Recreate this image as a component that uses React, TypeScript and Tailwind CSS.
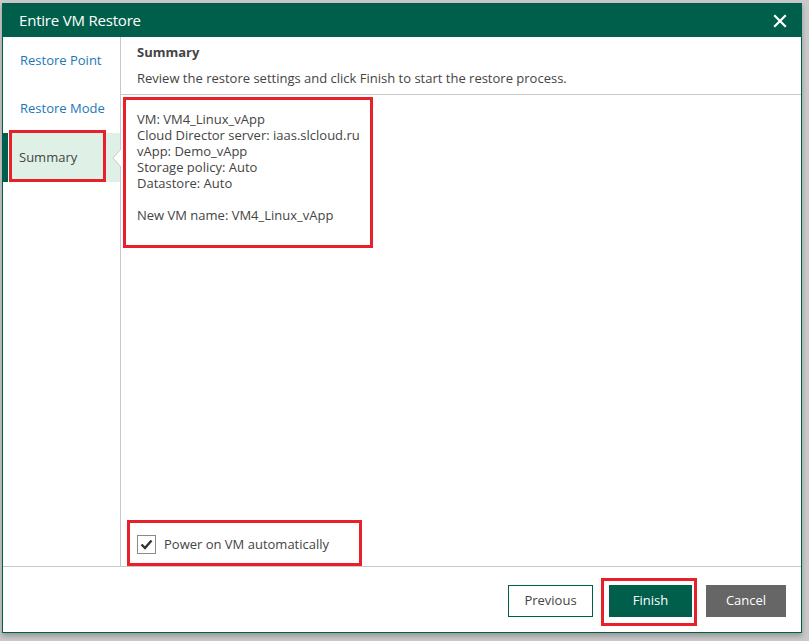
import React from "react";

const font = { fontFamily: '"Open Sans", "Noto Sans", sans-serif' };

export default function App() {
  const lines = [
    "VM: VM4_Linux_vApp",
    "Cloud Director server: iaas.slcloud.ru",
    "vApp: Demo_vApp",
    "Storage policy: Auto",
    "Datastore: Auto",
  ];
  return (
    <div
      className="relative w-[809px] h-[641px] bg-[#c9c9c9] pt-[3px] pl-[2px] overflow-hidden"
      style={font}
    >
      <div className="w-[800px] h-[630px] bg-white border border-[#005f4b] flex flex-col shadow-[0_3px_5px_rgba(0,0,0,0.25)]">
        {/* Header */}
        <div className="h-[33px] bg-[#005f4b] flex items-center justify-between pl-[16px] pr-[14px] shrink-0">
          <span className="text-white text-[15px] tracking-[-0.2px]">Entire VM Restore</span>
          <svg width="14" height="14" viewBox="0 0 14 14">
            <path d="M2 2 L12 12 M12 2 L2 12" stroke="white" strokeWidth="2.2" strokeLinecap="square" />
          </svg>
        </div>
        {/* Body */}
        <div className="flex flex-1 min-h-0 border-b border-[#c8c8c8]">
          {/* Sidebar */}
          <div className="w-[118px] border-r border-[#c8c8c8] shrink-0 flex flex-col">
            <div className="h-[48px] flex items-center pl-[17px] text-[13px] text-[#1b78b8]">Restore Point</div>
            <div className="h-[48px] flex items-center pl-[17px] text-[13px] text-[#1b78b8]">Restore Mode</div>
            <div className="relative h-[49px] flex items-center">
              <div className="w-[5px] h-full bg-[#005f4b]" />
              <div className="flex-1 h-full bg-[#dff0e7] ml-[1px] flex items-center pl-[10px] text-[13px] text-[#444]">
                Summary
              </div>
              <svg className="absolute right-[-1px] top-[16px]" width="9" height="18" viewBox="0 0 9 18">
                <path d="M9 0 L1 9 L9 18 Z" fill="white" />
                <path d="M9 0 L1 9 L9 18" fill="none" stroke="#c8c8c8" strokeWidth="1" />
              </svg>
            </div>
          </div>
          {/* Main */}
          <div className="flex-1 flex flex-col min-w-0">
            <div className="h-[58px] border-b border-[#c8c8c8] pl-[16px] pt-[6px] shrink-0">
              <div className="text-[13px] font-bold text-[#444] leading-[18px]">Summary</div>
              <div className="text-[13px] text-[#444] leading-[18px] mt-[8px]">
                Review the restore settings and click Finish to start the restore process.
              </div>
            </div>
            <div className="flex-1 flex flex-col justify-between pl-[16px] pt-[16px] pb-[12px]">
              <div className="text-[13px] text-[#444] leading-[16px]">
                {lines.map((l) => (
                  <div key={l}>{l}</div>
                ))}
                <div className="h-[16px]" />
                <div>New VM name: VM4_Linux_vApp</div>
              </div>
              <div className="flex items-center gap-[8px]">
                <div className="w-[19px] h-[19px] border border-[#8a8a8a] flex items-center justify-center">
                  <svg width="13" height="11" viewBox="0 0 13 11">
                    <path d="M1.5 5.5 L5 9 L11.5 1.5" fill="none" stroke="#333" strokeWidth="2.4" />
                  </svg>
                </div>
                <span className="text-[13px] text-[#444]">Power on VM automatically</span>
              </div>
            </div>
          </div>
        </div>
        {/* Footer */}
        <div className="h-[65px] shrink-0 flex items-center justify-end pr-[15px] gap-[14px] pt-[2px]">
          <button className="w-[85px] h-[32px] border border-[#005f4b] bg-white text-[13px] text-[#444]">
            Previous
          </button>
          <button className="w-[83px] h-[32px] ml-[2px] bg-[#005f4b] text-[13px] text-white">Finish</button>
          <button className="w-[80px] h-[32px] bg-[#666666] text-[13px] text-white">Cancel</button>
        </div>
      </div>

      {/* Red annotation boxes */}
      <div className="absolute left-[9px] top-[130px] w-[97px] h-[52px] border-[3px] border-[#e8202a]" />
      <div className="absolute left-[123px] top-[97px] w-[250px] h-[151px] border-[3px] border-[#e8202a]" />
      <div className="absolute left-[127px] top-[520px] w-[235px] h-[46px] border-[3px] border-[#e8202a]" />
      <div className="absolute left-[601px] top-[578px] w-[96px] h-[48px] border-[3px] border-[#e8202a]" />
    </div>
  );
}
